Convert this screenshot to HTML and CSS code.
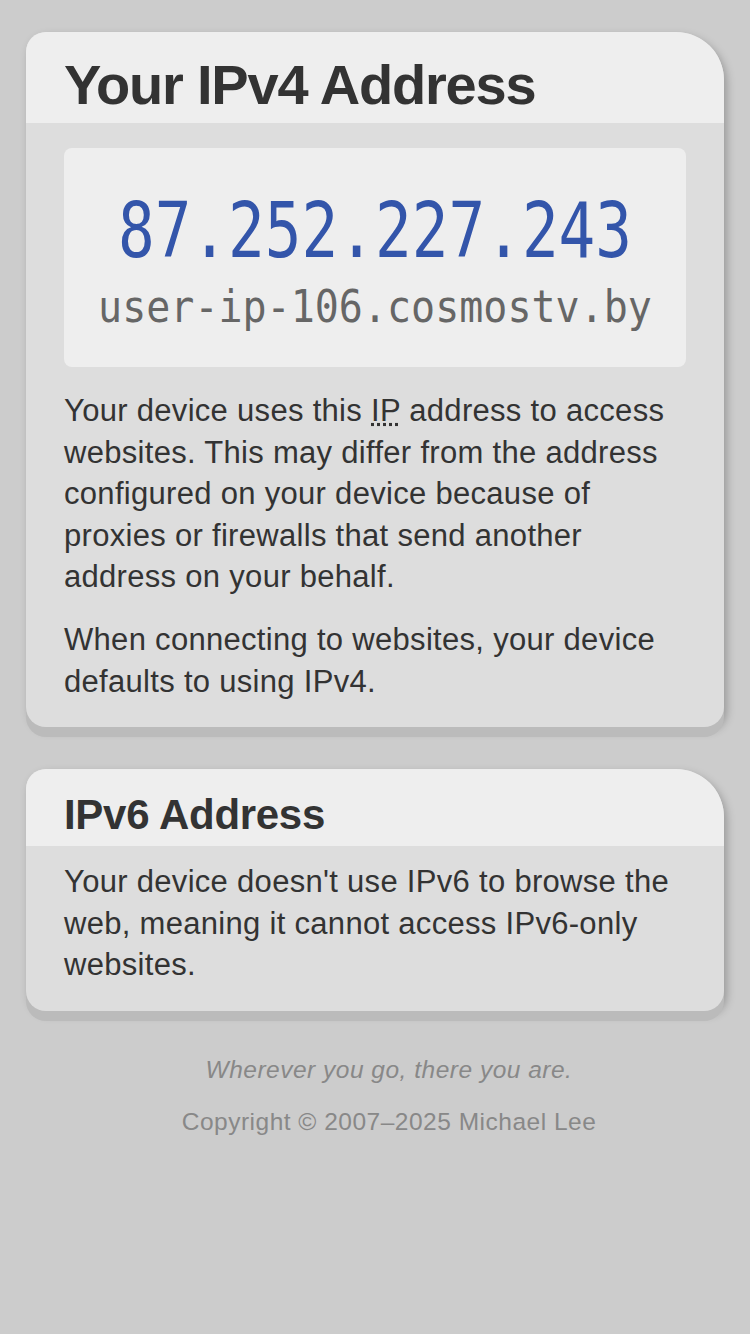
FILE: index.html
```html
<!DOCTYPE html>
<html>
<head>
  <title>What Is My IP Address?</title>
  <meta charset="utf-8" />
  <meta name="viewport" content="width=device-width, initial-scale=1.0" />
  <link rel="stylesheet" href="styles.css">
</head>
<body>
<div class="card">
  <h1 class="card-head big">Your IPv4 Address</h1>
  <div class="card-body">
    <div class="ipbox">
      <div class="ip"><span>87.252.227.243</span></div>
      <div class="host"><span>user-ip-106.cosmostv.by</span></div>
    </div>
    <p>Your device uses this <abbr title="Internet Protocol">IP</abbr> address to access websites. This may differ from the address configured on your device because of proxies or firewalls that send another address on your behalf.</p>
    <p>When connecting to websites, your device defaults to using IPv4.</p>
  </div>
</div>

<div class="card">
  <h2 class="card-head">IPv6 Address</h2>
  <div class="card-body">
    <p>Your device doesn't use IPv6 to browse the web, meaning it cannot access IPv6-only websites.</p>
  </div>
</div>

<div id="footer">
  <p class="motto">Wherever you go, there you are.</p>
  <p>Copyright &copy; 2007&ndash;2025 Michael Lee</p>
</div>
</body>
</html>
```

FILE: styles.css
```css
body {
  background: #ccc;
  color: #333;
  font-family: "Liberation Sans", Arial, sans-serif;
  margin: 0;
  padding: 32px 26px;
}
.card {
  background: #ddd;
  border-radius: 20px 48px 20px 20px;
  box-shadow: 0 10px 0 #bbb, 3px 4px 8px rgba(0, 0, 0, 0.25);
  margin-bottom: 42px;
  overflow: hidden;
}
.card-head {
  background: #eee;
  font-weight: bold;
  font-size: 42px;
  line-height: 48px;
  letter-spacing: -0.3px;
  margin: 0;
  padding: 22px 38px 7px;
}
.card-head.big {
  font-size: 56px;
  line-height: 62px;
  letter-spacing: -1.2px;
}
.card-body {
  padding: 15px 38px 25px;
}
.card-body p {
  font-size: 31px;
  letter-spacing: 0.3px;
  line-height: 41.5px;
  margin: 0 0 21.5px 0;
}
.card-body p:last-child {
  margin-bottom: 0;
}
abbr {
  text-decoration: underline dotted;
}
.ipbox {
  background: #eee;
  border-radius: 8px;
  margin: 10px 0 23px;
  padding: 41px 0 36px;
  text-align: center;
  font-family: "DejaVu Sans Mono", monospace;
}
.ipbox span {
  display: inline-block;
}
.ip {
  color: #3355aa;
  font-size: 61px;
  line-height: 84px;
}
.ip span {
  transform: scaleY(1.25);
}
.host {
  color: #666;
  font-size: 40px;
  line-height: 48px;
  margin-top: 10px;
}
.host span {
  transform: scaleY(1.1);
}
#footer {
  text-align: center;
  color: #888;
  font-size: 24.5px;
  letter-spacing: 0.5px;
  margin-top: 45px;
  padding-left: 28px;
}
#footer p {
  margin: 0 0 24px 0;
}
.motto {
  font-style: italic;
}
```
